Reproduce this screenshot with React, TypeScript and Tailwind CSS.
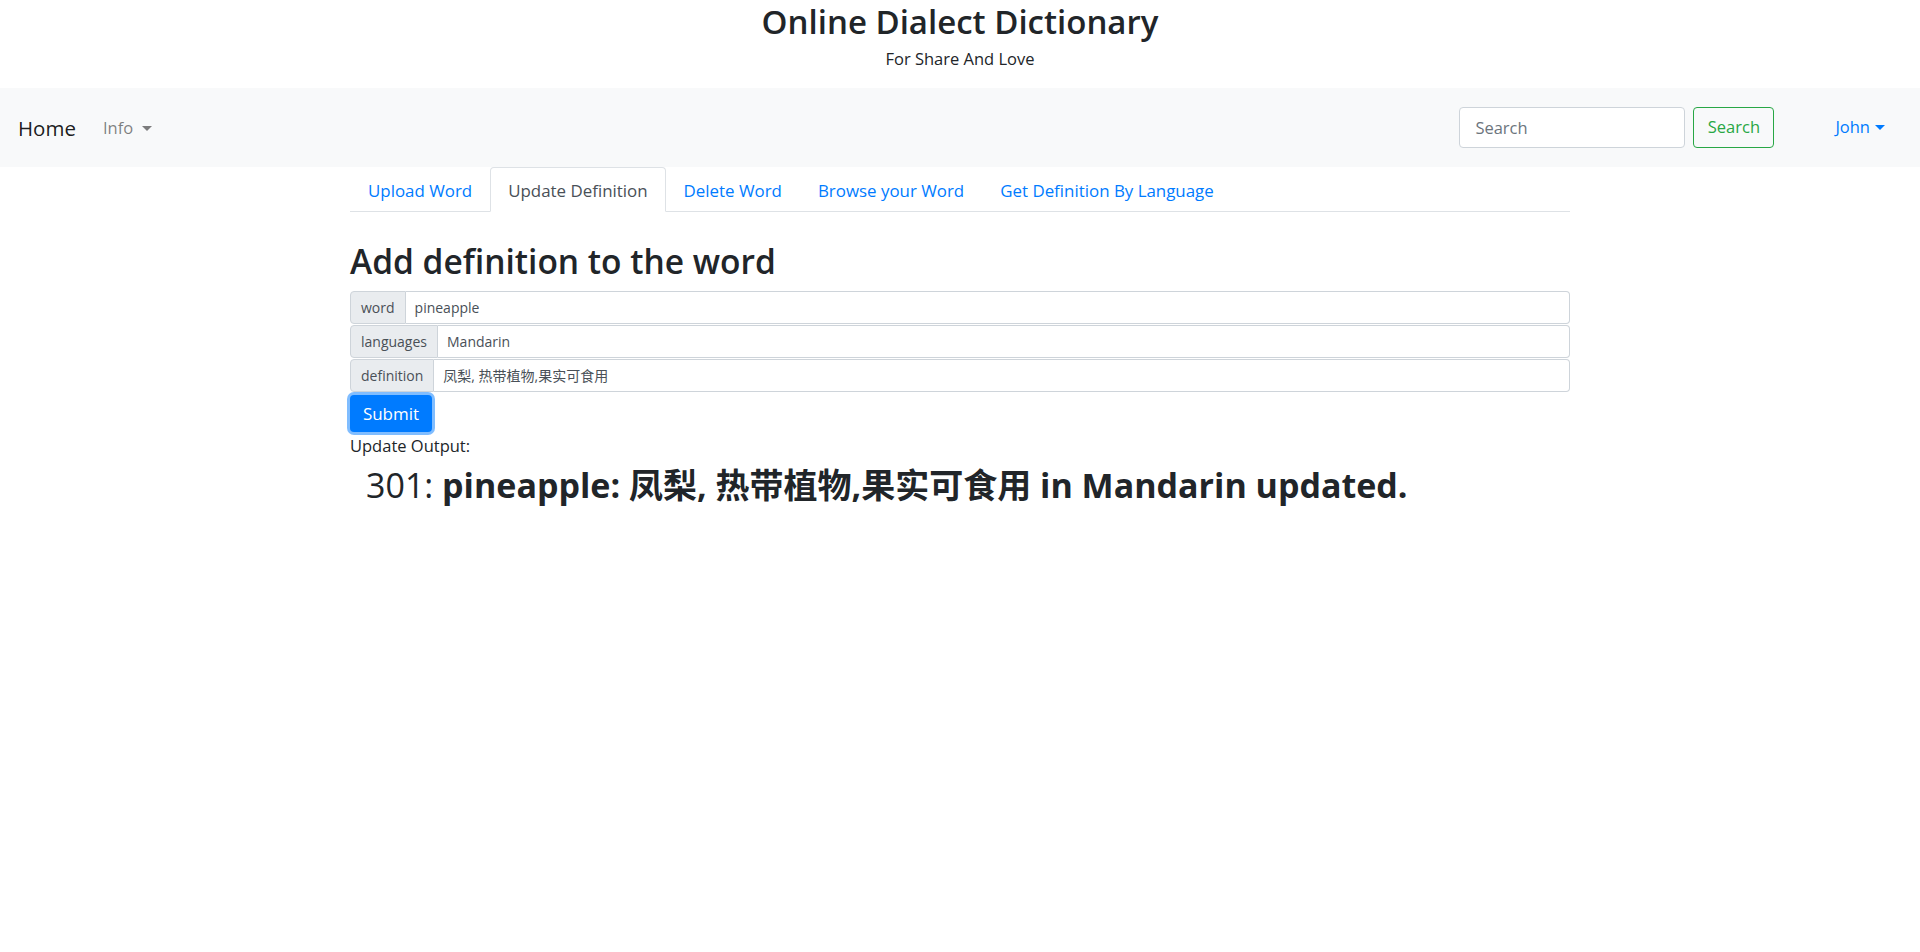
import React from 'react';

const tabs = [
  { label: 'Upload Word', active: false },
  { label: 'Update Definition', active: true },
  { label: 'Delete Word', active: false },
  { label: 'Browse your Word', active: false },
  { label: 'Get Definition By Language', active: false },
];

const fields = [
  { label: 'word', value: 'pineapple' },
  { label: 'languages', value: 'Mandarin' },
  { label: 'definition', value: '凤梨, 热带植物,果实可食用' },
];

const Caret = ({ className }: { className: string }) => (
  <svg width="10" height="5" viewBox="0 0 10 5" className={className}>
    <path d="M0 0h10L5 5z" fill="currentColor" />
  </svg>
);

export default function App() {
  return (
    <div className="min-h-screen bg-white text-[#212529] font-['Open_Sans','Noto_Sans_CJK_SC',sans-serif]">
      <header className="text-center">
        <h1 className="text-[33px] leading-[44px] font-semibold">Online Dialect Dictionary</h1>
        <p className="mt-[3px] text-[16.5px] leading-6">For Share And Love</p>
      </header>

      <nav className="mt-[17px] h-[79px] bg-[#f8f9fa] flex items-center pl-[18px] pr-[35px]">
        <a className="text-[20.5px] leading-[30px] text-[rgba(0,0,0,0.9)]">Home</a>
        <a className="ml-[27px] mt-[2px] flex items-center gap-[9px] text-[16.5px] text-[rgba(0,0,0,0.5)]">
          Info
          <Caret className="text-[rgba(0,0,0,0.5)]" />
        </a>
        <div className="ml-auto flex items-center">
          <input
            className="w-[226px] h-[41px] rounded border border-[#ced4da] bg-white px-[15px] text-[16.5px] placeholder:text-[#6c757d] outline-none"
            placeholder="Search"
          />
          <button className="ml-2 w-[81px] h-[41px] rounded border border-[#28a745] text-[#28a745] text-[16.5px]">
            Search
          </button>
          <a className="ml-[61px] flex items-center gap-[5px] text-[16.5px] text-[#007bff]">
            John
            <Caret className="text-[#007bff]" />
          </a>
        </div>
      </nav>

      <main className="w-[1220px] mx-auto">
        <ul className="flex border-b border-[#dee2e6] h-[45px]">
          {tabs.map((t) => (
            <li key={t.label} className="-mb-px">
              <a
                className={
                  t.active
                    ? 'h-[45px] flex items-center px-[17px] pt-[2px] border border-[#dee2e6] border-b-white rounded-t bg-white text-[#495057] text-[16.9px]'
                    : 'h-[45px] flex items-center px-[17px] pt-[2px] border border-transparent text-[#007bff] text-[16.9px]'
                }
              >
                {t.label}
              </a>
            </li>
          ))}
        </ul>

        <h2 className="mt-[29px] text-[33.5px] leading-10 font-semibold">Add definition to the word</h2>

        <form className="mt-[10px]">
          {fields.map((f) => (
            <div key={f.label} className="flex h-[33px] mb-px">
              <span className="flex items-center px-[10px] bg-[#e9ecef] border border-[#ced4da] rounded-l text-[14px] text-[#495057]">
                {f.label}
              </span>
              <div className="flex-1 flex items-center px-[9px] border border-l-0 border-[#ced4da] rounded-r text-[14px] text-[#495057]">
                {f.value}
              </div>
            </div>
          ))}
          <button
            type="button"
            className="mt-[2px] w-[82px] h-[37px] rounded bg-[#007bff] text-white text-[17px] ring-[3px] ring-[#80bdff]"
          >
            Submit
          </button>
        </form>

        <p className="mt-[2px] text-[16.5px] leading-6">Update Output:</p>
        <h3 className="mt-[7px] pl-4 text-[34px] leading-10">
          301: <b className="font-bold">pineapple: 凤梨, 热带植物,果实可食用 in Mandarin updated.</b>
        </h3>
      </main>
    </div>
  );
}
